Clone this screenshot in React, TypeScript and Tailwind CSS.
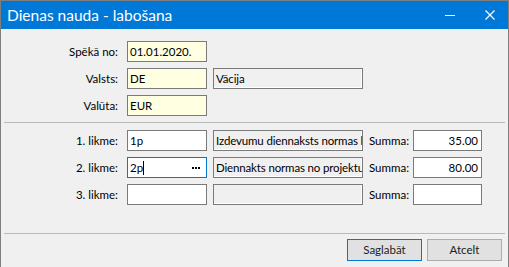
import React from "react";

const font = { fontFamily: 'Lato, "Noto Sans", sans-serif' };

function Label({ children }: { children: React.ReactNode }) {
  return (
    <div className="w-[118px] shrink-0 text-right pr-[1px] text-[11.5px] leading-[21px] text-black">
      {children}
    </div>
  );
}

function Input({
  value,
  bg = "bg-white",
  w = "w-[80px]",
  right = false,
  border = "border-[#7a7a7a]",
  children,
}: {
  value?: string;
  bg?: string;
  w?: string;
  right?: boolean;
  border?: string;
  children?: React.ReactNode;
}) {
  return (
    <div
      className={`${w} h-[21px] shrink-0 border ${border} ${bg} flex items-center px-[2px] text-[11.5px] leading-[19px] text-black overflow-hidden whitespace-nowrap ${
        right ? "justify-end pr-[3px]" : ""
      }`}
    >
      {value}
      {children}
    </div>
  );
}

function Disabled({ value }: { value?: string }) {
  return (
    <div className="w-[150px] h-[21px] shrink-0 border border-[#7a7a7a] bg-[#f0f0f0] shadow-[inset_-1px_-1px_0_#ffffff] flex items-center px-[2px] text-[11.5px] tracking-[-0.15px] leading-[19px] text-black overflow-hidden whitespace-nowrap">
      {value}
    </div>
  );
}

function Summa({ value }: { value: string }) {
  return (
    <>
      <div className="w-[38px] shrink-0 text-[11.5px] leading-[21px] text-black whitespace-nowrap">Summa:</div>
      <Input w="w-[69px]" value={value} right />
    </>
  );
}

export default function App() {
  return (
    <div
      className="w-[509px] h-[267px] overflow-hidden bg-[#f0f0f0] border-t border-l border-r border-[#7f7f7f] flex flex-col"
      style={font}
    >
      <div className="h-[28px] shrink-0 bg-[#0078d7] flex items-center text-white">
        <div className="pl-[6px] text-[15.5px] leading-[28px]">Dienas nauda - labošana</div>
        <div className="ml-auto flex items-center h-full">
          <div className="w-[10px] h-[1px] bg-white mr-[30px]" />
          <svg width="10" height="10" viewBox="0 0 10 10" className="mr-[13px]">
            <path d="M0.5 0.5 L9.5 9.5 M9.5 0.5 L0.5 9.5" stroke="white" strokeWidth="1.2" />
          </svg>
        </div>
      </div>

      <div className="flex flex-col pt-[12px]">
        <div className="flex flex-col gap-[6px]">
          <div className="flex items-center">
            <Label>Spēkā no:</Label>
            <div className="ml-[8px]">
              <Input bg="bg-[#ffffe1]" value="01.01.2020." />
            </div>
          </div>
          <div className="flex items-center gap-[6px]">
            <Label>Valsts:</Label>
            <div className="ml-[2px]">
              <Input bg="bg-[#ffffe1]" value="DE" />
            </div>
            <Disabled value="Vācija" />
          </div>
          <div className="flex items-center">
            <Label>Valūta:</Label>
            <div className="ml-[8px]">
              <Input bg="bg-[#ffffe1]" value="EUR" />
            </div>
          </div>
        </div>

        <div className="mx-[3px] mt-[6px] h-[1px] bg-[#b9b9b9]" />

        <div className="flex flex-col gap-[6px] mt-[7px]">
          <div className="flex items-center gap-[6px]">
            <Label>1. likme:</Label>
            <div className="ml-[2px]">
              <Input value="1p" />
            </div>
            <Disabled value="Izdevumu diennaksts normas k" />
            <Summa value="35.00" />
          </div>
          <div className="flex items-center gap-[6px]">
            <Label>2. likme:</Label>
            <div className="ml-[2px]">
              <Input border="border-[#0078d7]">
                <span>2p</span>
                <span className="w-[1px] h-[14px] bg-black" />
                <span className="ml-auto mr-[4px] flex gap-[1px]">
                  <span className="w-[2px] h-[2px] bg-black" />
                  <span className="w-[2px] h-[2px] bg-black" />
                  <span className="w-[2px] h-[2px] bg-black" />
                </span>
              </Input>
            </div>
            <Disabled value="Diennakts normas no projektu" />
            <Summa value="80.00" />
          </div>
          <div className="flex items-center gap-[6px]">
            <Label>3. likme:</Label>
            <div className="ml-[2px]">
              <Input />
            </div>
            <Disabled />
            <Summa value="" />
          </div>
        </div>

        <div className="mx-[3px] mt-[28px] h-[1px] bg-[#b9b9b9]" />

        <div className="flex justify-end gap-[5px] mt-[5px] pr-[6px]">
          <div className="w-[75px] h-[22px] border border-[#0078d7] bg-[#e1e1e1] flex items-center justify-center text-[11.5px] text-[#222]">
            Saglabāt
          </div>
          <div className="w-[75px] h-[22px] border border-[#adadad] bg-[#e1e1e1] flex items-center justify-center text-[11.5px] text-[#222]">
            Atcelt
          </div>
        </div>
      </div>
    </div>
  );
}
